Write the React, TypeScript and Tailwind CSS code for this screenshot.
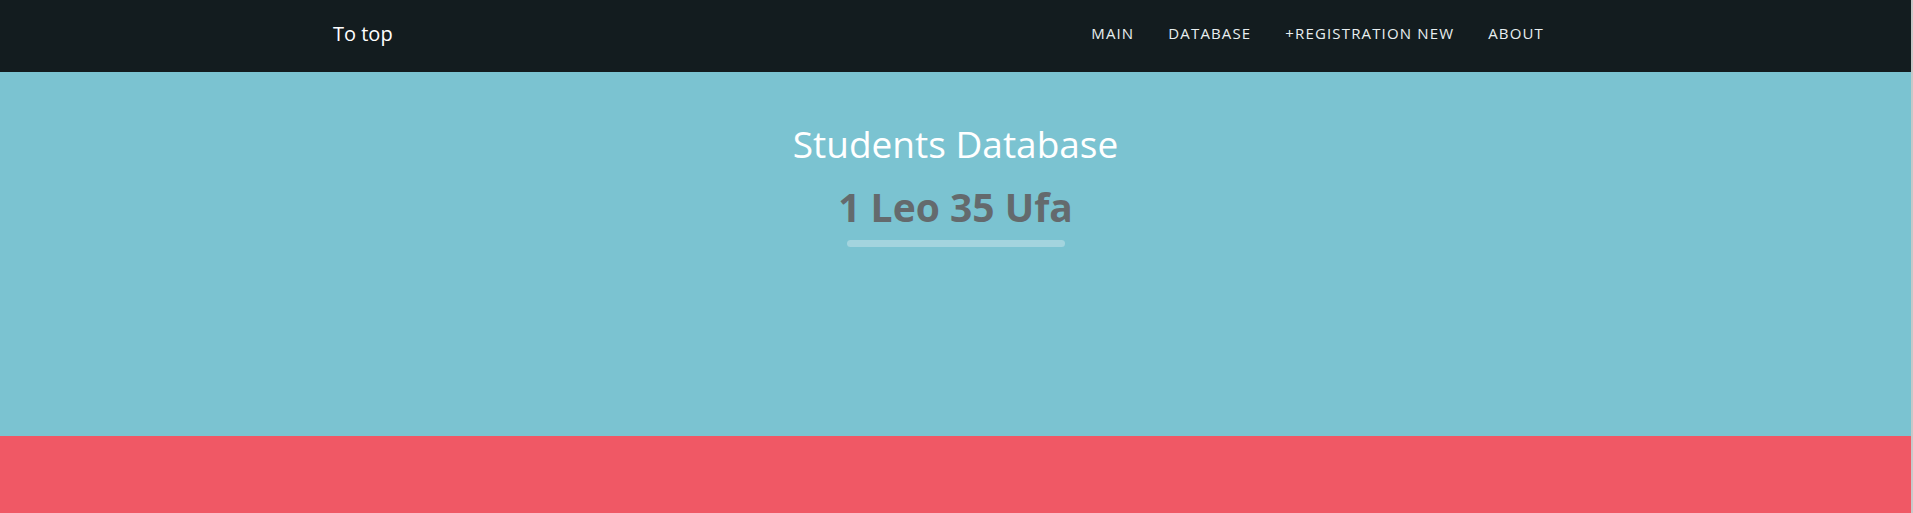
import React from 'react';

const links = ['MAIN', 'DATABASE', '+REGISTRATION NEW', 'ABOUT'];

const App = () => {
    return (
        <div className="flex min-h-[513px] w-full font-['Open_Sans',sans-serif]">
            <div className="flex flex-1 flex-col">
                {/* navbar */}
                <nav className="flex h-[72px] items-center justify-between bg-[#131c1f] pl-[333px] pr-[350px]">
                    <a className="text-[20px] leading-none text-white pb-[4px]">To top</a>
                    <ul className="flex items-center">
                        {links.map((l) => (
                            <li key={l} className="px-[17px] text-[15px] leading-none tracking-[1.15px] text-[#e8eef0] pb-[6px]">
                                {l}
                            </li>
                        ))}
                    </ul>
                </nav>

                {/* header */}
                <header className="flex h-[364px] flex-col items-center bg-[#7bc3d1] pt-[48px]">
                    <h1 className="text-[37px] leading-[48px] text-white">Students Database</h1>
                    <h2 className="mt-[15px] text-[39px] font-bold leading-[48px] text-[#646a6d]">1 Leo 35 Ufa</h2>
                    <div className="mt-[9px] h-[7px] w-[218px] rounded-full bg-[#a3d4de]" />
                </header>

                <section className="flex-1 bg-[#f05865]" />
            </div>
            <div className="w-[2px] bg-[#c8c8c8]" />
        </div>
    );
};

export default App;
